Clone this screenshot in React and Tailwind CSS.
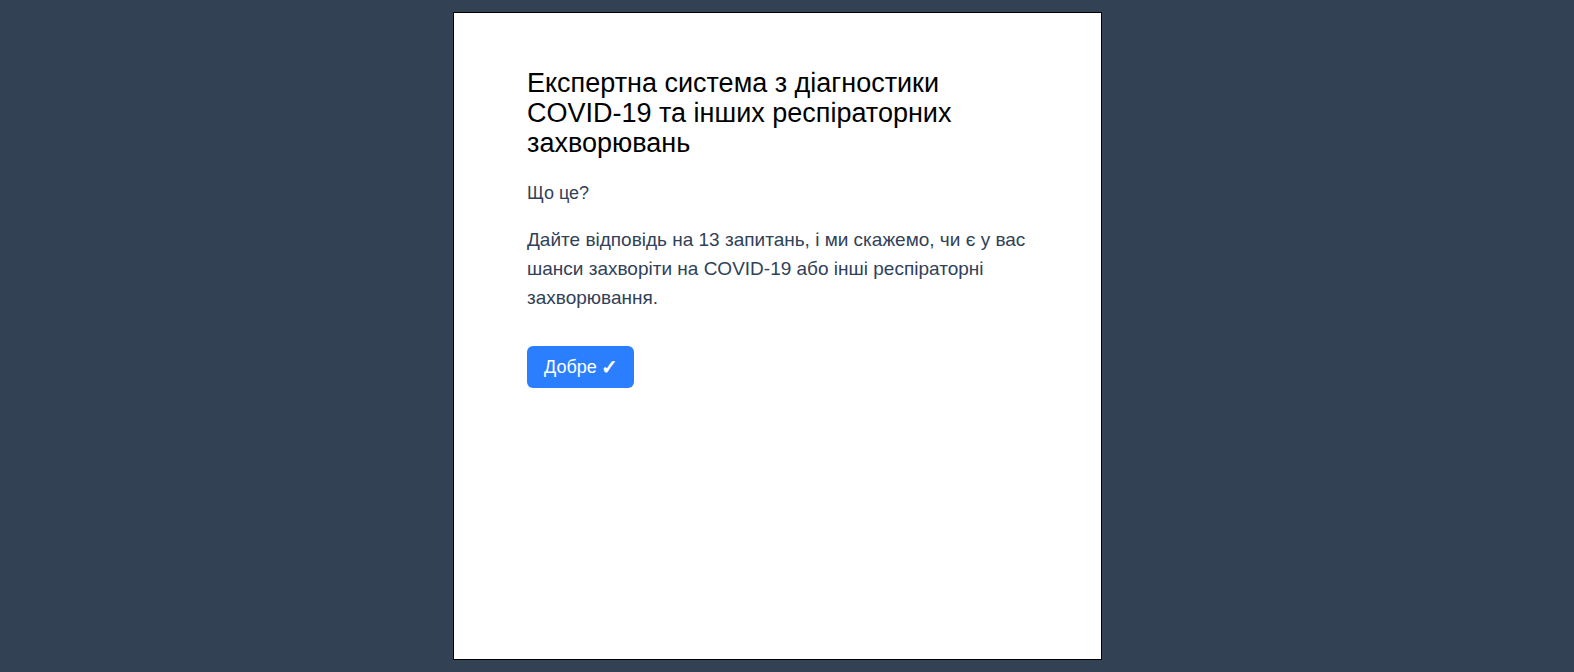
import React from "react";

const App = () => {
  return (
    <div
      className="min-h-screen bg-[#334155] pl-[453px] pt-3"
      style={{ fontFamily: '"Liberation Sans", Arial, sans-serif' }}
    >
      <div className="w-[649px] h-[648px] bg-white border border-black pt-[55px] px-[71px]">
        <h1 className="pl-[2px] text-[27px] leading-[30px] text-black font-normal">
          Експертна система з діагностики COVID-19 та інших респіраторних
          захворювань
        </h1>

        <div className="pl-[2px]">
          <p className="mt-[21px] text-lg leading-relaxed text-slate-700">Що це?</p>

          <p className="mt-[17px] text-[19px] leading-[29px] text-slate-700">
            Дайте відповідь на 13 запитань, і ми скажемо, чи є у вас шанси
            захворіти на COVID-19 або інші респіраторні захворювання.
          </p>

          <button
            type="button"
            className="mt-[34px] h-[42px] pl-[17px] pr-4 flex items-center gap-1 bg-blue-500 text-white text-lg rounded-md"
          >
            Добре <span className="font-bold text-xl">✓</span>
          </button>
        </div>
      </div>
    </div>
  );
};

export default App;
